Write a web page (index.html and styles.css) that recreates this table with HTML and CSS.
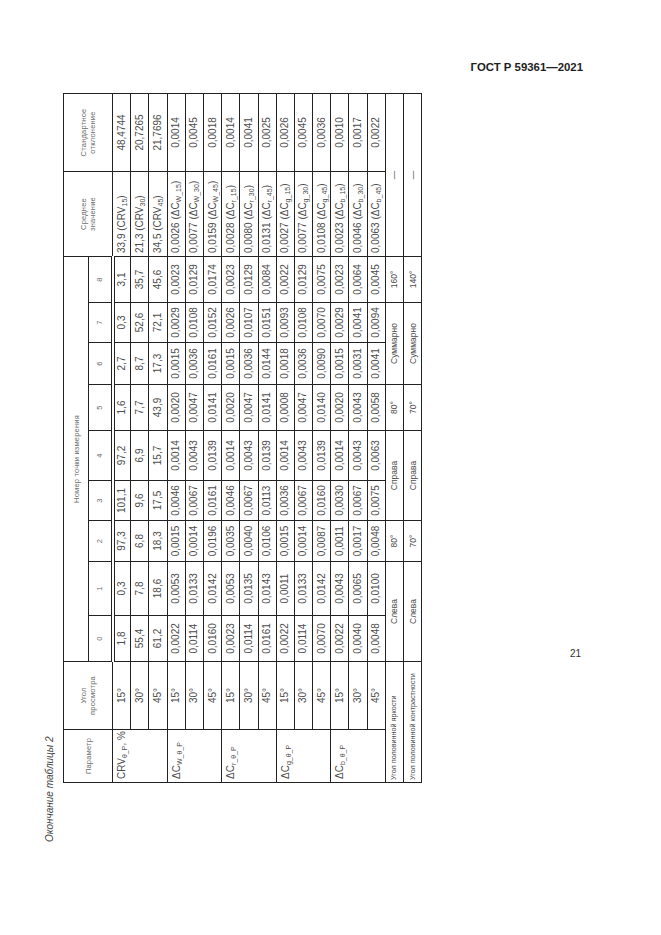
FILE: index.html
```html
<!DOCTYPE html>
<html lang="ru">
<head>
<meta charset="utf-8">
<title>ГОСТ Р 59361—2021</title>
<link rel="stylesheet" href="styles.css">
</head>
<body>
<div class="page">
  <header class="running">ГОСТ Р 59361—2021</header>
  <div class="main">
    <div class="sheet">
      <div class="rot">
        <div class="caption">Окончание таблицы 2</div>
        <table class="t">
          <colgroup>
            <col class="c-par"><col class="c-ang">
            <col class="c0"><col class="c1"><col class="c2"><col class="c3"><col class="c4">
            <col class="c5"><col class="c6"><col class="c7"><col class="c8">
            <col class="c-mean"><col class="c-sd">
          </colgroup>
          <thead>
            <tr class="h1">
              <th rowspan="2">Параметр</th>
              <th rowspan="2">Угол<br>просмотра</th>
              <th colspan="9">Номер точки измерения</th>
              <th rowspan="2">Среднее<br>значение</th>
              <th rowspan="2">Стандартное<br>отклонение</th>
            </tr>
            <tr class="h2">
              <th>0</th><th>1</th><th>2</th><th>3</th><th>4</th><th>5</th><th>6</th><th>7</th><th>8</th>
            </tr>
          </thead>
          <tbody>
            <tr>
              <td class="par" rowspan="3">CRV<sub>θ_P</sub>, %</td>
              <td>15°</td><td>1,8</td><td>0,3</td><td>97,3</td><td>101,1</td><td>97,2</td><td>1,6</td><td>2,7</td><td>0,3</td><td>3,1</td>
              <td class="mean">33,9 (CRV<sub>15</sub>)</td><td>48,4744</td>
            </tr>
            <tr>
              <td>30°</td><td>55,4</td><td>7,8</td><td>6,8</td><td>9,6</td><td>6,9</td><td>7,7</td><td>8,7</td><td>52,6</td><td>35,7</td>
              <td class="mean">21,3 (CRV<sub>30</sub>)</td><td>20,7265</td>
            </tr>
            <tr>
              <td>45°</td><td>61,2</td><td>18,6</td><td>18,3</td><td>17,5</td><td>15,7</td><td>43,9</td><td>17,3</td><td>72,1</td><td>45,6</td>
              <td class="mean">34,5 (CRV<sub>45</sub>)</td><td>21,7696</td>
            </tr>

            <tr>
              <td class="par" rowspan="3">ΔC<sub>W_θ_P</sub></td>
              <td>15°</td><td>0,0022</td><td>0,0053</td><td>0,0015</td><td>0,0046</td><td>0,0014</td><td>0,0020</td><td>0,0015</td><td>0,0029</td><td>0,0023</td>
              <td class="mean">0,0026 (ΔC<sub>W_15</sub>)</td><td>0,0014</td>
            </tr>
            <tr>
              <td>30°</td><td>0,0114</td><td>0,0133</td><td>0,0014</td><td>0,0067</td><td>0,0043</td><td>0,0047</td><td>0,0036</td><td>0,0108</td><td>0,0129</td>
              <td class="mean">0,0077 (ΔC<sub>W_30</sub>)</td><td>0,0045</td>
            </tr>
            <tr>
              <td>45°</td><td>0,0160</td><td>0,0142</td><td>0,0196</td><td>0,0161</td><td>0,0139</td><td>0,0141</td><td>0,0161</td><td>0,0152</td><td>0,0174</td>
              <td class="mean">0,0159 (ΔC<sub>W_45</sub>)</td><td>0,0018</td>
            </tr>

            <tr>
              <td class="par" rowspan="3">ΔC<sub>r_θ_P</sub></td>
              <td>15°</td><td>0,0023</td><td>0,0053</td><td>0,0035</td><td>0,0046</td><td>0,0014</td><td>0,0020</td><td>0,0015</td><td>0,0026</td><td>0,0023</td>
              <td class="mean">0,0028 (ΔC<sub>r_15</sub>)</td><td>0,0014</td>
            </tr>
            <tr>
              <td>30°</td><td>0,0114</td><td>0,0135</td><td>0,0040</td><td>0,0067</td><td>0,0043</td><td>0,0047</td><td>0,0036</td><td>0,0107</td><td>0,0129</td>
              <td class="mean">0,0080 (ΔC<sub>r_30</sub>)</td><td>0,0041</td>
            </tr>
            <tr>
              <td>45°</td><td>0,0161</td><td>0,0143</td><td>0,0106</td><td>0,0113</td><td>0,0139</td><td>0,0141</td><td>0,0144</td><td>0,0151</td><td>0,0084</td>
              <td class="mean">0,0131 (ΔC<sub>r_45</sub>)</td><td>0,0025</td>
            </tr>

            <tr>
              <td class="par" rowspan="3">ΔC<sub>g_θ_P</sub></td>
              <td>15°</td><td>0,0022</td><td>0,0011</td><td>0,0015</td><td>0,0036</td><td>0,0014</td><td>0,0008</td><td>0,0018</td><td>0,0093</td><td>0,0022</td>
              <td class="mean">0,0027 (ΔC<sub>g_15</sub>)</td><td>0,0026</td>
            </tr>
            <tr>
              <td>30°</td><td>0,0114</td><td>0,0133</td><td>0,0014</td><td>0,0067</td><td>0,0043</td><td>0,0047</td><td>0,0036</td><td>0,0108</td><td>0,0129</td>
              <td class="mean">0,0077 (ΔC<sub>g_30</sub>)</td><td>0,0045</td>
            </tr>
            <tr>
              <td>45°</td><td>0,0070</td><td>0,0142</td><td>0,0087</td><td>0,0160</td><td>0,0139</td><td>0,0140</td><td>0,0090</td><td>0,0070</td><td>0,0075</td>
              <td class="mean">0,0108 (ΔC<sub>g_45</sub>)</td><td>0,0036</td>
            </tr>

            <tr>
              <td class="par" rowspan="3">ΔC<sub>b_θ_P</sub></td>
              <td>15°</td><td>0,0022</td><td>0,0043</td><td>0,0011</td><td>0,0030</td><td>0,0014</td><td>0,0020</td><td>0,0015</td><td>0,0029</td><td>0,0023</td>
              <td class="mean">0,0023 (ΔC<sub>b_15</sub>)</td><td>0,0010</td>
            </tr>
            <tr>
              <td>30°</td><td>0,0040</td><td>0,0065</td><td>0,0017</td><td>0,0067</td><td>0,0043</td><td>0,0043</td><td>0,0031</td><td>0,0041</td><td>0,0064</td>
              <td class="mean">0,0046 (ΔC<sub>b_30</sub>)</td><td>0,0017</td>
            </tr>
            <tr>
              <td>45°</td><td>0,0048</td><td>0,0100</td><td>0,0048</td><td>0,0075</td><td>0,0063</td><td>0,0058</td><td>0,0041</td><td>0,0094</td><td>0,0045</td>
              <td class="mean">0,0063 (ΔC<sub>b_45</sub>)</td><td>0,0022</td>
            </tr>

            <tr class="half">
              <td class="label" colspan="2">Угол половинной яркости</td>
              <td colspan="2">Слева</td><td>80°</td>
              <td colspan="2">Справа</td><td>80°</td>
              <td colspan="2">Суммарно</td><td>160°</td>
              <td colspan="2">—</td>
            </tr>
            <tr class="half">
              <td class="label" colspan="2">Угол половинной контрастности</td>
              <td colspan="2">Слева</td><td>70°</td>
              <td colspan="2">Справа</td><td>70°</td>
              <td colspan="2">Суммарно</td><td>140°</td>
              <td colspan="2">—</td>
            </tr>
          </tbody>
        </table>
      </div>
    </div>
    <div class="aside">
      <span class="pgnum">21</span>
    </div>
  </div>
</div>
</body>
</html>
```

FILE: styles.css
```css
html, body {
  margin: 0;
  padding: 0;
  background: #ffffff;
}

body {
  font-family: "Liberation Sans", Arial, sans-serif;
  color: #333333;
}

.page {
  width: 661px;
  height: 935px;
  overflow: hidden;
}

.running {
  padding-top: 61px;
  padding-right: 78px;
  height: 13px;
  line-height: 13px;
  text-align: right;
  font-weight: bold;
  font-size: 11.4px;
  color: #1e1e1e;
}

.main {
  display: flex;
  margin-top: 20px;
  padding-left: 44px;
}

.sheet {
  flex: none;
  width: 382px;
  height: 748px;
}

.rot {
  width: 748px;
  height: 382px;
  transform-origin: 0 0;
  transform: translateY(748px) rotate(-90deg);
}

.caption {
  height: 12px;
  line-height: 12px;
  margin-bottom: 7px;
  font-size: 10px;
  font-style: italic;
  color: #444444;
}

.t {
  margin-left: 59px;
  width: 689px;
  table-layout: fixed;
  border-collapse: collapse;
  border: 1px solid #222222;
}

.c-par { width: 53px; }
.c-ang { width: 68px; }
.c0 { width: 46px; }
.c1 { width: 54px; }
.c2 { width: 41px; }
.c3 { width: 40px; }
.c4 { width: 50px; }
.c5 { width: 46px; }
.c6 { width: 42px; }
.c7 { width: 40px; }
.c8 { width: 46px; }
.c-mean { width: 85px; }
.c-sd { width: 78px; }

.t th,
.t td {
  border: 1px solid #222222;
  padding: 0;
  text-align: center;
  vertical-align: middle;
  white-space: nowrap;
  overflow: hidden;
}

.t th {
  font-weight: normal;
  font-size: 7.5px;
  line-height: 9px;
  color: #6a6a6a;
  letter-spacing: 0.2px;
}

.t thead tr.h1 { height: 25px; }
.t thead tr.h2 { height: 24px; }

.t thead tr.h2 th {
  border-bottom: 4px double #222222;
}

.t td {
  font-size: 10px;
  line-height: 12px;
  color: #4c4c4c;
}

.t tbody tr { height: 18.2px; }

.t td.par {
  text-align: left;
  vertical-align: top;
  padding: 3px 0 0 3px;
}

.t td.mean {
  text-align: left;
  padding-left: 3px;
}

.t sub {
  font-size: 70%;
  line-height: 0;
  vertical-align: -2px;
}

.t tr.half td {
  font-size: 8.5px;
}

.t tr.half td.label {
  text-align: left;
  padding-left: 2px;
  font-size: 7.2px;
}

.aside {
  flex: 1;
  padding-top: 549px;
  padding-right: 80px;
  text-align: right;
}

.pgnum {
  font-size: 10px;
  line-height: 12px;
  color: #333333;
}
```
